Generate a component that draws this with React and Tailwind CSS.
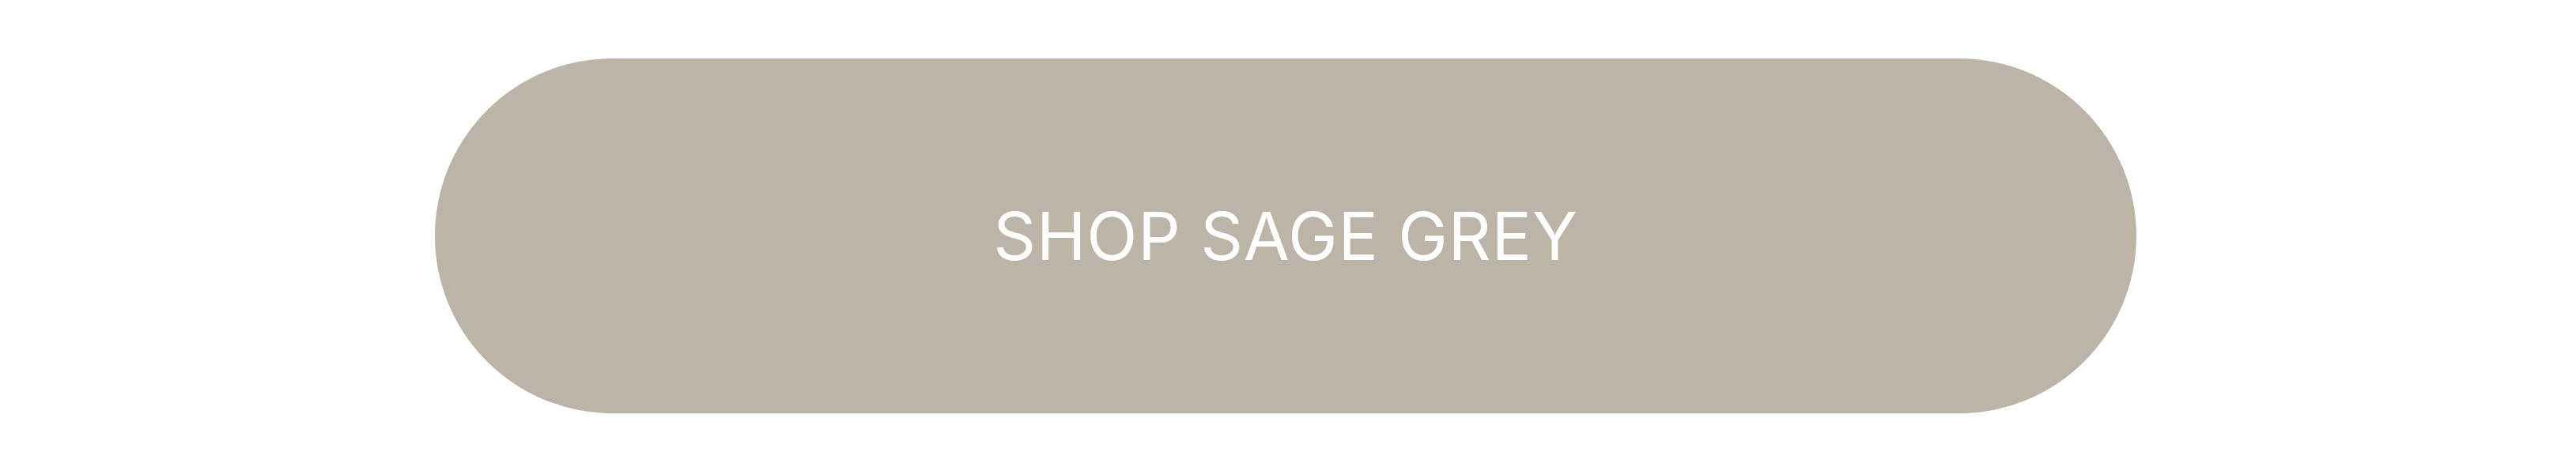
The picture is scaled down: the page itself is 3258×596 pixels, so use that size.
import React from 'react';

export default function App() {
  return (
    <div className="w-[3258px] h-[596px] bg-white pt-[74px] pl-[550px]">
      <a
        href="#"
        className="flex items-center justify-center w-[2152px] h-[449px] rounded-full bg-[#bcb5a7] text-white no-underline"
      >
        <span
          className="text-[84px] leading-none font-normal uppercase tracking-[0.01em]"
          style={{ fontFamily: 'Inter, "Open Sans", sans-serif' }}
        >
          Shop Sage Grey
        </span>
      </a>
    </div>
  );
}
